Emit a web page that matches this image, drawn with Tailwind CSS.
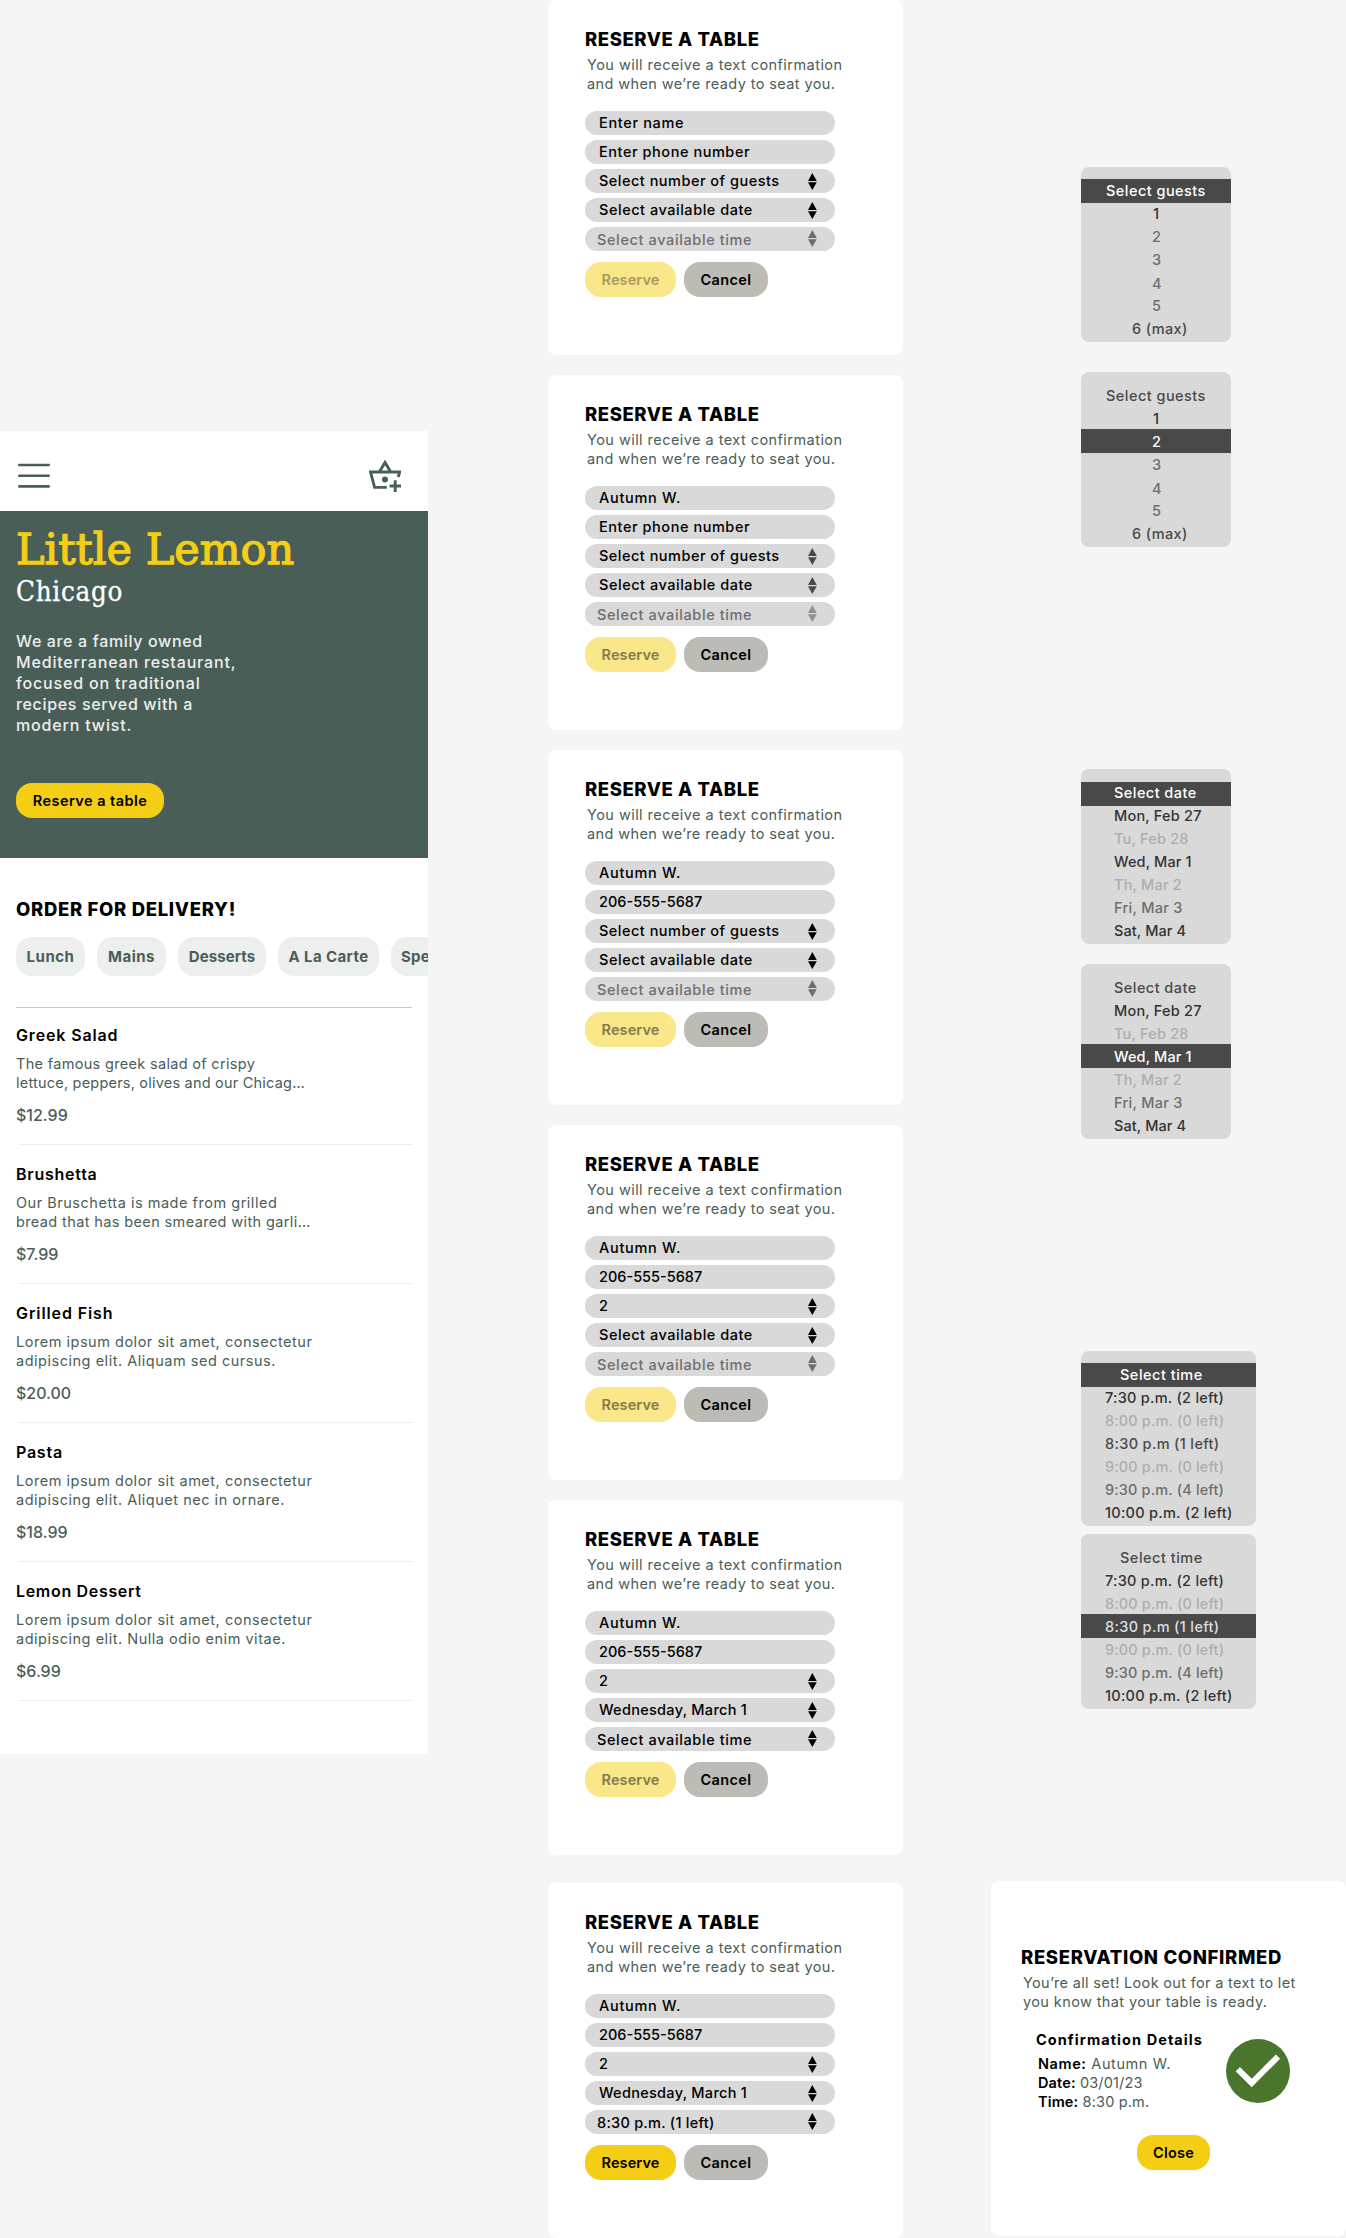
<!DOCTYPE html>
<html lang="en">
<head>
<meta charset="utf-8">
<title>Little Lemon – reservation flow</title>
<script src="https://cdn.jsdelivr.net/npm/@tailwindcss/browser@4"></script>
</head>
<body class="flex h-[2238px] w-[1346px] items-start overflow-hidden bg-[#f5f5f5] font-['Inter','Liberation_Sans',sans-serif] text-[14.5px] text-black">

<!-- Home screen -->
<main class="mt-[431px] h-[1323px] w-[428px] shrink-0 overflow-hidden bg-white">
  <header class="flex h-20 items-center justify-between pr-[27px] pl-[18px]">
    <svg class="mt-[9px] h-[25px] w-8" viewBox="0 0 32 25" stroke="#495e57" stroke-width="2.6" stroke-linecap="round"><path d="M1.3 2h29.4M1.3 12.7h29.4M1.3 23.4h29.4"/></svg>
    <svg class="mt-[10px] h-8 w-8" viewBox="0 0 32 32" fill="none" stroke="#495e57" stroke-width="2.9">
      <path d="M10.3 12 16 2.4 21.7 12"/>
      <path d="M29.3 17 30.6 12H1.5L5.6 27.4H17.8"/>
      <circle cx="16" cy="19.5" r="3" fill="#495e57" stroke="none"/>
      <path d="M26.2 20.3v12M20.6 26h11.5"/>
    </svg>
  </header>
  <section class="h-[347px] bg-[#495e57] pt-[14px] pl-4">
    <h1 class="text-[43px] leading-[48px] text-[#f4ce14] font-['DejaVu_Serif',serif] [-webkit-text-stroke:1.3px_#f4ce14]">Little Lemon</h1>
    <h2 class="mt-[2px] text-[27.5px] leading-8 tracking-[0.7px] text-white font-['DejaVu_Serif_Condensed','DejaVu_Serif',serif] [-webkit-text-stroke:0.3px_#fff]">Chicago</h2>
    <p class="mt-6 text-base leading-[21px] font-medium tracking-[0.83px] whitespace-nowrap text-[#edefee]"><span class="tracking-[0.65px]">We are a family owned</span><br>Mediterranean restaurant,<br>focused on traditional<br><span class="tracking-[0.65px]">recipes served with a</span><br>modern twist.</p>
    <button class="mt-[47px] flex h-[35px] w-[148px] items-center justify-center rounded-2xl bg-[#f4ce14] font-semibold tracking-[0.45px]">Reserve a table</button>
  </section>
  <section class="pt-[39px] pl-4">
    <h2 class="text-[18.5px] leading-6 font-extrabold tracking-[0.68px]">ORDER FOR DELIVERY!</h2>
    <nav class="mt-4 flex gap-3 text-[15px] font-bold whitespace-nowrap text-[#495e57]">
      <span class="flex h-[39px] w-[69px] shrink-0 items-center justify-center rounded-2xl bg-[#edefee] pt-px tracking-[0.5px]">Lunch</span>
      <span class="flex h-[39px] w-[69px] shrink-0 items-center justify-center rounded-2xl bg-[#edefee] pt-px tracking-[0.5px]">Mains</span>
      <span class="flex h-[39px] w-[88px] shrink-0 items-center justify-center rounded-2xl bg-[#edefee] pt-px tracking-[0.1px]">Desserts</span>
      <span class="flex h-[39px] w-[101px] shrink-0 items-center justify-center rounded-2xl bg-[#edefee] pt-px tracking-[0.4px]">A La Carte</span>
      <span class="flex h-[39px] w-[90px] shrink-0 items-center rounded-2xl bg-[#edefee] pt-px pl-[10px] tracking-[0.2px]">Specials</span>
    </nav>
    <hr class="mt-[31px] w-[396px] border-[#c8cecc]">
    <div id="dishes" class="-mt-[2px]"></div>
  </section>
</main>

<!-- Reservation dialogs -->
<div id="dialogs" class="ml-[120px] flex w-[355px] shrink-0 flex-col gap-5"></div>

<!-- Pickers and confirmation -->
<div class="ml-[88px] w-[355px] shrink-0">
  <div id="menus" class="h-[1881px] pl-[90px]"></div>
  <section class="h-[355px] rounded-lg bg-white pt-[64px]">
    <h2 class="pl-[30px] text-[18.5px] leading-6 font-extrabold tracking-[0.66px] whitespace-nowrap">RESERVATION CONFIRMED</h2>
    <p class="mt-[4px] pl-8 leading-[19px] tracking-[0.33px] whitespace-nowrap text-[#495e57]">You’re all set! Look out for a text to let<br><span class="tracking-[0.4px]">you know that your table is ready.</span></p>
    <div class="flex h-[106px]">
      <div class="w-[235px] pt-[19px] pl-[45px] leading-[19px] whitespace-nowrap">
        <h3 class="font-bold tracking-[1.07px]">Confirmation Details</h3>
        <p class="mt-[5px] pl-[2px] tracking-[0.6px] text-[#495e57]"><b class="font-semibold text-black">Name:</b> Autumn W.</p>
        <p class="pl-[2px] tracking-[0.15px] text-[#495e57]"><b class="font-semibold text-black">Date:</b> 03/01/23</p>
        <p class="pl-[2px] tracking-[0.15px] text-[#495e57]"><b class="font-semibold text-black">Time:</b> 8:30 p.m.</p>
      </div>
      <svg class="mt-[28px] h-16 w-16" viewBox="0 0 64 64"><circle cx="32" cy="32" r="32" fill="#49752c"/><path d="M11.8 30.2 25.7 44 52 17.6" fill="none" stroke="#fff" stroke-width="6"/></svg>
    </div>
    <button class="mt-[18px] ml-[146px] flex h-[35px] w-[73px] items-center justify-center rounded-2xl bg-[#f4ce14] font-semibold tracking-[0.2px]">Close</button>
  </section>
</div>

<script>
const dishes = [
  ['Greek Salad', 'tracking-[0.85px]', '<span class="tracking-[0.32px]">The famous greek salad of crispy</span><br><span class="tracking-[0.21px]">lettuce, peppers, olives and our Chicag…</span>', '$12.99'],
  ['Brushetta', 'tracking-[0.75px]', 'Our Bruschetta is made from grilled<br><span class="tracking-[0.38px]">bread that has been smeared with garli…</span>', '$7.99'],
  ['Grilled Fish', 'tracking-[0.9px]', 'Lorem ipsum dolor sit amet, consectetur<br>adipiscing elit. Aliquam sed cursus.', '$20.00'],
  ['Pasta', 'tracking-[0.75px]', 'Lorem ipsum dolor sit amet, consectetur<br>adipiscing elit. Aliquet nec in ornare.', '$18.99'],
  ['Lemon Dessert', 'tracking-[0.68px]', 'Lorem ipsum dolor sit amet, consectetur<br>adipiscing elit. Nulla odio enim vitae.', '$6.99'],
];
document.getElementById('dishes').innerHTML = dishes.map(([name, track, text, price]) => `
  <article class="h-[139px] pt-[19px]">
    <h3 class="text-base leading-5 font-semibold ${track}">${name}</h3>
    <p class="mt-[9px] leading-[19px] tracking-[0.52px] whitespace-nowrap text-[#495e57]">${text}</p>
    <p class="mt-[13px] text-base leading-5 font-medium text-[#495e57]">${price}</p>
    <div class="mt-[19px] ml-[2px] h-px w-[394px] bg-[#edefee]"></div>
  </article>`).join('');

// Field: [label, letter spacing]
const name = ['Autumn W.', 'tracking-[0.7px]'], phone = ['206-555-5687', 'tracking-normal'];
const guests = ['Select number of guests', 'tracking-[0.49px]'], two = ['2', 'tracking-normal'];
const date = ['Select available date', 'tracking-[0.53px]'], wed = ['Wednesday, March 1', 'tracking-[0.29px]'];
const time = ['Select available time', 'tracking-[0.62px]'];
const K = 'text-black', D = 'text-[#494949]', G = 'text-[#6e6e6e]', L = 'text-[#929292]';
const off = 'bg-[#f9e789] text-[#847b49]';
const dialogs = [
  { f: [['Enter name', 'tracking-[0.65px]'], ['Enter phone number', 'tracking-[0.55px]'], guests, date, time], a: K, t: G, ta: G, b: 'bg-[#f9e789] text-[#a59a62]' },
  { f: [name, ['Enter phone number', 'tracking-[0.55px]'], guests, date, time], a: D, t: G, ta: L, b: off },
  { f: [name, phone, guests, date, time], a: K, t: G, ta: G, b: off },
  { f: [name, phone, two, date, time], a: K, t: G, ta: G, b: off },
  { f: [name, phone, two, wed, time], a: K, t: K, ta: K, b: off },
  { f: [name, phone, two, wed, ['8:30 p.m. (1 left)', 'tracking-[0.26px]']], a: K, t: K, ta: K, b: 'bg-[#f4ce14] text-black', m: 'mt-2' },
];
const arrows = (cls) => `<svg class="h-[17px] w-[9px] ${cls}" viewBox="0 0 9 17" fill="currentColor"><path d="M4.3 0 8.8 8H0zM0 9.3h8.8L4.3 17z"/></svg>`;
document.getElementById('dialogs').innerHTML = dialogs.map(d => `
  <section class="h-[355px] shrink-0 rounded-lg bg-white pt-[27px] pl-[37px] ${d.m || ''}">
    <h2 class="text-[18.5px] leading-6 font-extrabold tracking-[0.58px]">RESERVE A TABLE</h2>
    <p class="mt-1 pl-[2px] leading-[19px] tracking-[0.45px] whitespace-nowrap text-[#495e57]">You will receive a text confirmation<br><span class="tracking-[0.4px]">and when we’re ready to seat you.</span></p>
    <div class="mt-[18px] flex flex-col gap-[5px] font-medium">
      ${d.f.map(([label, track], i) => `
      <div class="flex h-6 w-[250px] items-center justify-between rounded-full bg-[#d9d9d9] pr-[18px] ${i == 4 ? 'pl-[12px]' : 'pl-[14px]'}">
        <span class="whitespace-nowrap ${track} ${i == 4 ? 'mt-[2px] ' + d.t : ''}">${label}</span>
        ${i < 2 ? '' : i == 4 ? arrows('mb-px ' + d.ta) : arrows('mt-px ' + d.a)}
      </div>`).join('')}
    </div>
    <div class="mt-[11px] flex gap-2 font-semibold">
      <button class="flex h-[35px] w-[91px] items-center justify-center rounded-2xl tracking-[0.1px] ${d.b}">Reserve</button>
      <button class="flex h-[35px] w-[84px] items-center justify-center rounded-2xl bg-[#bdbbb5] tracking-[0.36px]">Cancel</button>
    </div>
  </section>`).join('');

const dark = 'text-[#333333]', mid = 'text-[#494949]', soft = 'text-[#6e6e6e]', pale = 'text-[#adadad]';
const guestRows = [['Select guests', mid + ' pl-[25px] tracking-[0.46px]'], ['1', dark + ' pl-[72px]'], ['2', soft + ' pl-[71px]'], ['3', soft + ' pl-[71px]'], ['4', soft + ' pl-[71px] pt-[2px]'], ['5', soft + ' pl-[71px] pt-px'], ['6 (max)', mid + ' pl-[51px] tracking-[0.4px]']];
const dateRows = [['Select date', mid + ' pl-[33px] tracking-[0.45px]'], ['Mon, Feb 27', dark + ' pl-[33px] tracking-[0.2px]'], ['Tu, Feb 28', pale + ' pl-[33px] tracking-[0.2px]'], ['Wed, Mar 1', dark + ' pl-[33px] tracking-[0.14px]'], ['Th, Mar 2', pale + ' pl-[33px] tracking-[0.2px]'], ['Fri, Mar 3', soft + ' pl-[33px] tracking-[0.3px]'], ['Sat, Mar 4', dark + ' pl-[33px] tracking-[0.1px]']];
const timeRows = [['Select time', mid + ' pl-[39px] tracking-[0.5px]'], ['7:30 p.m. (2 left)', dark + ' pl-[24px] tracking-[0.26px]'], ['8:00 p.m. (0 left)', pale + ' pl-[24px] tracking-[0.15px]'], ['8:30 p.m (1 left)', mid + ' pl-[24px] tracking-[0.35px]'], ['9:00 p.m. (0 left)', pale + ' pl-[24px] tracking-[0.15px]'], ['9:30 p.m. (4 left)', soft + ' pl-[24px] tracking-[0.15px]'], ['10:00 p.m. (2 left)', dark + ' pl-[24px] tracking-[0.28px]']];
// Picker: [size and margin, rows, index of the highlighted row, highlight classes]
const menus = [
  ['mt-0 w-[150px]', guestRows, 0, 'h-6 -mb-px text-white'],
  ['mt-[30px] w-[150px]', guestRows, 2, 'h-6 -mt-px pt-[2px] text-white'],
  ['mt-[222px] w-[150px]', dateRows, 0, 'h-6 mt-px -mb-[2px] pb-[2px] text-white'],
  ['mt-5 w-[150px]', dateRows, 3, 'h-6 -mt-px pt-[2px] text-white'],
  ['mt-[212px] w-[175px]', timeRows, 0, 'h-6 -mb-px text-white'],
  ['mt-2 w-[175px]', timeRows, 3, 'h-6 -mt-px pt-[2px] text-[#dedede]'],
];
document.getElementById('menus').innerHTML = '<div class="h-[167px]"></div>' + menus.map(([box, rows, on, hl]) => `
  <ul class="h-[175px] rounded-lg bg-[#d9d9d9] pt-3 font-medium whitespace-nowrap ${box}">
    ${rows.map(([label, cls], i) => {
      const inset = cls.replace(/text-\S+/, '');
      return `<li class="flex items-center ${i === on ? 'bg-[#494949] ' + hl + ' ' + inset : 'h-[23px] ' + cls}">${label}</li>`;
    }).join('')}
  </ul>`).join('');
</script>
</body>
</html>
